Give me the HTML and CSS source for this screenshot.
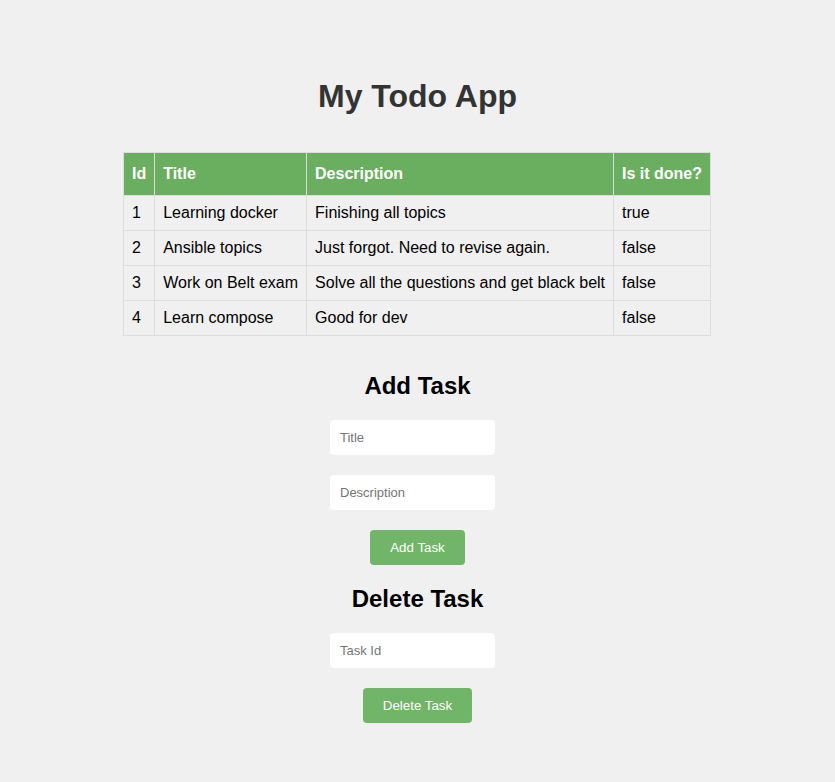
FILE: index.html
```
<!DOCTYPE html>
<html>
<head>
<meta charset="utf-8">
<link rel="stylesheet" href="styles.css">
</head>
<body>
<div class="app">
  <h1 class="title">My Todo App</h1>
  <table class="tasks">
    <thead>
      <tr><th>Id</th><th>Title</th><th>Description</th><th>Is it done?</th></tr>
    </thead>
    <tbody>
      <tr><td>1</td><td>Learning docker</td><td>Finishing all topics</td><td>true</td></tr>
      <tr><td>2</td><td>Ansible topics</td><td>Just forgot. Need to revise again.</td><td>false</td></tr>
      <tr><td>3</td><td>Work on Belt exam</td><td>Solve all the questions and get black belt</td><td>false</td></tr>
      <tr><td>4</td><td>Learn compose</td><td>Good for dev</td><td>false</td></tr>
    </tbody>
  </table>
  <h2 class="section add-title">Add Task</h2>
  <form class="form">
    <input class="field" type="text" placeholder="Title">
    <input class="field" type="text" placeholder="Description">
    <button class="btn" type="button">Add Task</button>
  </form>
  <h2 class="section del-title">Delete Task</h2>
  <form class="form">
    <input class="field" type="text" placeholder="Task Id">
    <button class="btn" type="button">Delete Task</button>
  </form>
</div>
</body>
</html>
```
FILE: styles.css
```
html, body {
  margin: 0;
  padding: 0;
  background: #f0f0f0;
}
body {
  font-family: "Liberation Sans", Arial, sans-serif;
  color: #000;
}
.app {
  display: flex;
  flex-direction: column;
  align-items: center;
  padding-top: 78px;
}
.title {
  margin: 0;
  font-size: 32px;
  line-height: 37px;
  color: #333;
  font-weight: bold;
}
.tasks {
  margin-top: 37px;
  margin-right: 1px;
  border-collapse: collapse;
  font-size: 16px;
}
.tasks th, .tasks td {
  border: 1px solid #dddddd;
  text-align: left;
  line-height: 18px;
}
.tasks th {
  background: #6aae5f;
  color: #fff;
  font-weight: bold;
  padding: 12px 8px;
}
.tasks td {
  padding: 8px;
}
.section {
  margin: 0;
  font-size: 24px;
  line-height: 28px;
  font-weight: bold;
}
.add-title {
  margin-top: 36px;
}
.del-title {
  margin-top: 20px;
}
.form {
  display: flex;
  flex-direction: column;
  align-items: center;
  gap: 20px;
  margin-top: 20px;
}
.field {
  box-sizing: border-box;
  width: 165px;
  height: 35px;
  margin-right: 10px;
  padding: 0 10px;
  border: none;
  border-radius: 4px;
  background: #fff;
  font-family: "Liberation Sans", Arial, sans-serif;
  font-size: 13px;
  color: #000;
  outline: none;
}
.field::placeholder {
  color: #757575;
}
.btn {
  height: 35px;
  padding: 0 20px;
  border: none;
  border-radius: 4px;
  background: #71b568;
  color: #fff;
  font-family: "Liberation Sans", Arial, sans-serif;
  font-size: 13.333px;
  cursor: pointer;
}
```
